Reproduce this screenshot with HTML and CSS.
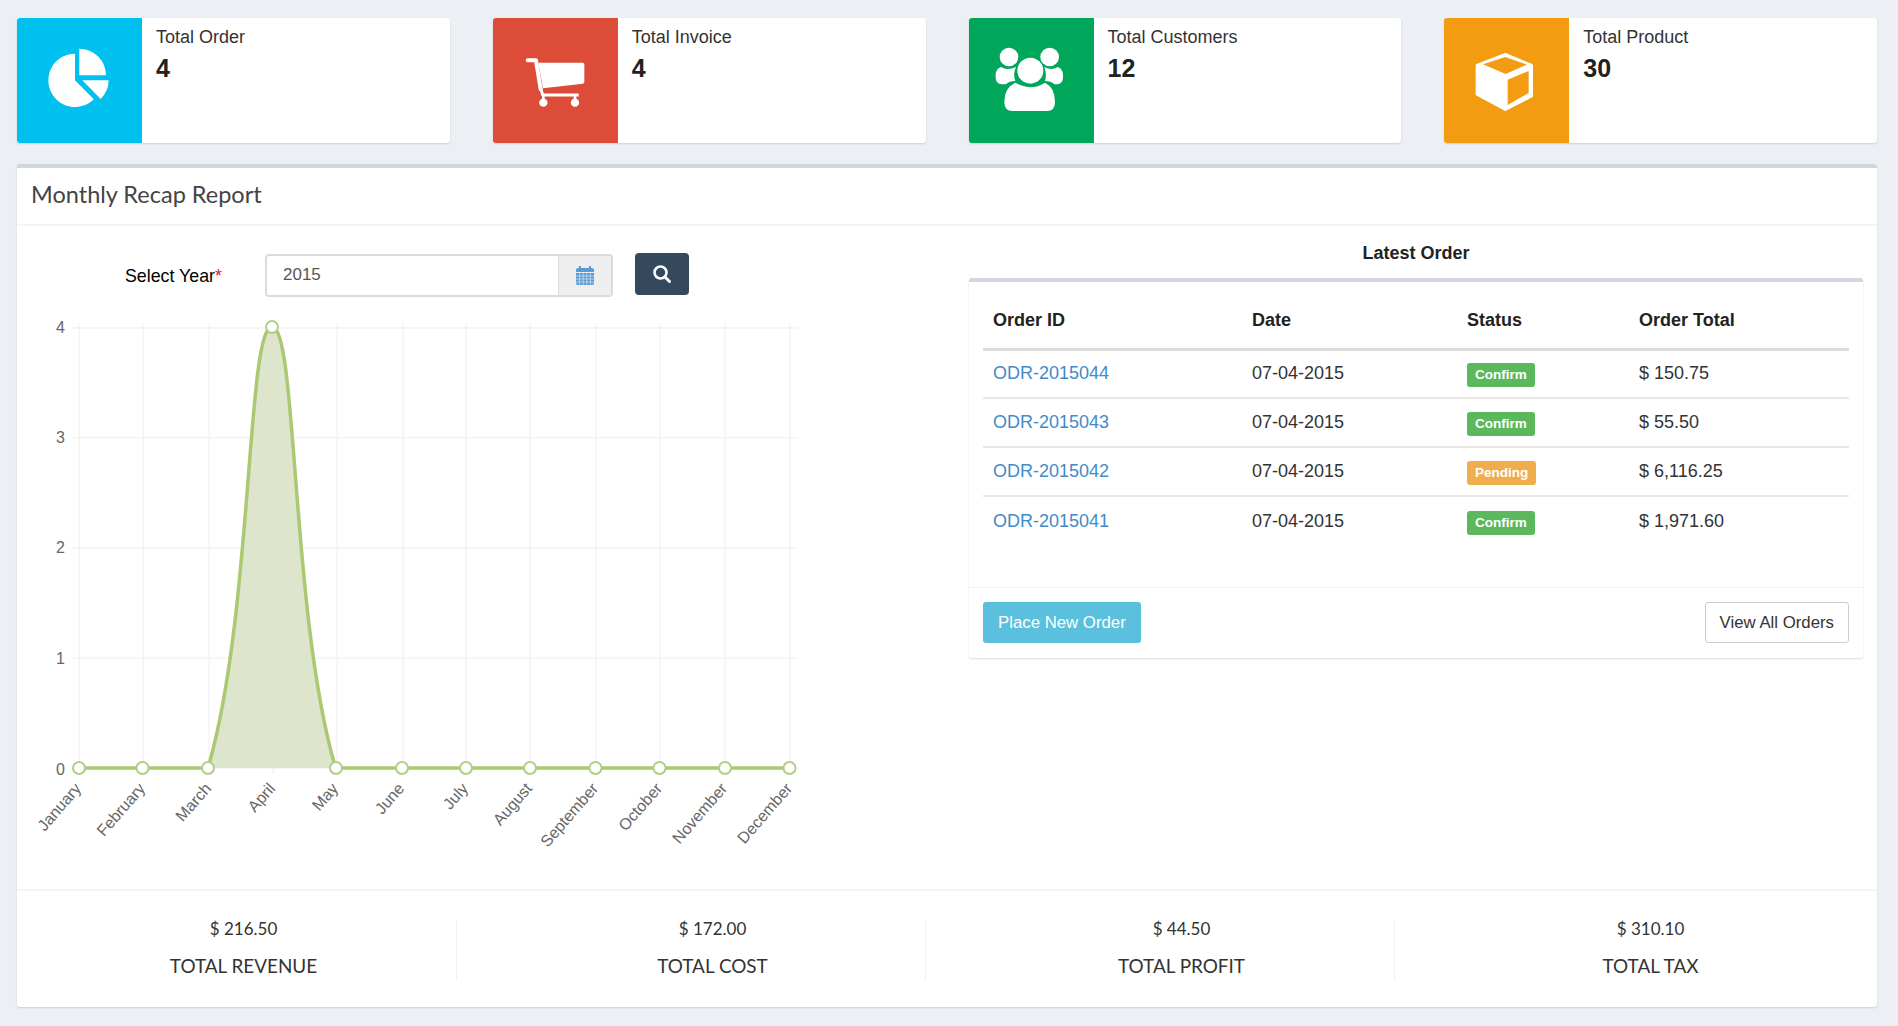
FILE: index.html
```html
<!DOCTYPE html>
<html lang="en">
<head>
<meta charset="utf-8">
<title>Monthly Recap Report</title>
<link rel="stylesheet" href="styles.css">
</head>
<body>
<main class="page">
  <section class="cards">
    <article class="card">
      <div class="card-icon bg-blue">
        <svg class="icon" viewBox="0 0 300 300"><path fill="#fff" d="M135 68V148L191.600 204.600A80 80 0 1 1 135 68Z"/><path fill="#fff" d="M148 53A80 80 0 0 1 228 133H148Z"/><path fill="#fff" d="M157 148H236A80 80 0 0 1 212 204Z"/></svg>
      </div>
      <div class="card-body"><div class="card-label">Total Order</div><div class="card-value">4</div></div>
    </article>
    <article class="card">
      <div class="card-icon bg-red">
        <svg class="icon icon-cart" viewBox="0 0 300 300"><path fill="none" stroke="#fff" stroke-width="12" stroke-linecap="round" stroke-linejoin="round" d="M65 88H90L104 175"/><path fill="#fff" d="M97 95H230Q235 95 235 100V152Q235 157 230 158L111 172Z"/><path fill="none" stroke="#fff" stroke-width="9" stroke-linejoin="round" d="M104 172L110 192H218"/><path fill="none" stroke="#fff" stroke-width="8" d="M112 192V210M207 192V210"/><circle cx="112" cy="215" r="12.500" fill="#fff"/><circle cx="207" cy="215" r="12.500" fill="#fff"/></svg>
      </div>
      <div class="card-body"><div class="card-label">Total Invoice</div><div class="card-value">4</div></div>
    </article>
    <article class="card">
      <div class="card-icon bg-green">
        <svg class="icon" viewBox="0 0 300 300"><circle cx="84" cy="78" r="28" fill="#fff"/><circle cx="206" cy="78" r="28" fill="#fff"/><circle cx="148" cy="119" r="39" fill="#fff"/><path fill="#fff" d="M44 130Q46 112 60 108Q78 120 105 108Q95 130 103 150Q85 150 75 160H62Q44 158 44 140Z"/><path fill="#fff" d="M246 130Q244 112 230 108Q212 120 190 108Q198 130 192 150Q210 150 220 160H228Q246 158 246 140Z"/><path fill="#fff" d="M70 212Q70 170 103 155Q148 182 192 155Q222 170 222 212Q222 240 198 240H94Q70 240 70 212Z"/></svg>
      </div>
      <div class="card-body"><div class="card-label">Total Customers</div><div class="card-value">12</div></div>
    </article>
    <article class="card">
      <div class="card-icon bg-orange">
        <svg class="icon" viewBox="0 0 300 300"><path fill="#fff" stroke="#fff" stroke-width="8" stroke-linejoin="round" d="M145 70L224 103V195L145 236L60 190V103Z"/><path fill="#f39c12" d="M145 78L210 101L146 129L78 100Z"/><path fill="#f39c12" d="M152 146L215 120V186L152 222Z"/></svg>
      </div>
      <div class="card-body"><div class="card-label">Total Product</div><div class="card-value">30</div></div>
    </article>
  </section>

  <section class="box">
    <header class="box-header"><h1 class="box-title">Monthly Recap Report</h1></header>
    <div class="box-body">
      <div class="left-col">
        <form class="year-form">
          <label class="year-label">Select Year<span class="req">*</span></label>
          <div class="input-group">
            <span class="year-input">2015</span>
            <span class="input-addon">
              <svg class="cal" viewBox="0 0 18 19"><path fill="#5b9bd5" d="M0 4Q0 2 2 2H3V0H5V2H13V0H15V2H16Q18 2 18 4V6H0Z"/><path fill="#5b9bd5" d="M0 7H18V17Q18 19 16 19H2Q0 19 0 17Z"/><path stroke="#d4e3f3" stroke-width=".7" d="M0 10H18M0 13H18M0 16H18M3.600 7V19M7.200 7V19M10.800 7V19M14.400 7V19"/></svg>
            </span>
          </div>
          <button type="button" class="search-btn" aria-label="Search">
            <svg class="search" viewBox="0 0 20 20"><circle cx="8.500" cy="8.500" r="6" fill="none" stroke="#fff" stroke-width="2.600"/><path stroke="#fff" stroke-width="3" stroke-linecap="round" d="M13 13L17.500 17.500"/></svg>
          </button>
        </form>
        <svg class="chart" viewBox="17 300 810 580">
          <g class="grid">
            <path d="M72 328H798M72 437.700H798M72 548H798M72 658H798M72 768H798"/>
            <path d="M79 323V774M143 323V774M209 323V774M273 323V774M337 323V774M403 323V774M466 323V774M530 323V774M596 323V774M660 323V774M725 323V774M790 323V774"/>
          </g>
          <g class="y-axis">
            <text x="65" y="332.500">4</text><text x="65" y="442.500">3</text><text x="65" y="552.500">2</text><text x="65" y="663.500">1</text><text x="65" y="774.500">0</text>
          </g>
          <path class="area" d="M208 768C253 614 246.500 327 272 327C297.500 327 290.600 615 335.600 768Z"/>
          <path class="line" d="M79 768H208C253 614 246.500 327 272 327C297.500 327 290.600 615 335.600 768H790"/>
          <g class="points">
            <circle cx="79" cy="768" r="6"/><circle cx="142.500" cy="768" r="6"/><circle cx="208" cy="768" r="6"/><circle cx="272" cy="327" r="6"/><circle cx="336" cy="768" r="6"/><circle cx="402" cy="768" r="6"/><circle cx="466" cy="768" r="6"/><circle cx="530" cy="768" r="6"/><circle cx="595.500" cy="768" r="6"/><circle cx="659.500" cy="768" r="6"/><circle cx="725" cy="768" r="6"/><circle cx="789.500" cy="768" r="6"/>
          </g>
          <g class="x-axis">
            <text transform="translate(82 789) rotate(-49)">January</text>
            <text transform="translate(146 789) rotate(-49)">February</text>
            <text transform="translate(212 789) rotate(-49)">March</text>
            <text transform="translate(276 789) rotate(-49)">April</text>
            <text transform="translate(339 789) rotate(-49)">May</text>
            <text transform="translate(405 789) rotate(-49)">June</text>
            <text transform="translate(469 789) rotate(-49)">July</text>
            <text transform="translate(533 789) rotate(-49)">August</text>
            <text transform="translate(599 789) rotate(-49)">September</text>
            <text transform="translate(663 789) rotate(-49)">October</text>
            <text transform="translate(728 789) rotate(-49)">November</text>
            <text transform="translate(793 789) rotate(-49)">December</text>
          </g>
        </svg>
      </div>

      <div class="right-col">
        <h2 class="latest-title">Latest Order</h2>
        <div class="order-box">
          <div class="order-table-wrap">
            <table class="order-table">
              <colgroup><col class="c-id"><col class="c-date"><col class="c-status"><col class="c-total"></colgroup>
              <thead><tr><th>Order ID</th><th>Date</th><th>Status</th><th>Order Total</th></tr></thead>
              <tbody>
                <tr><td><a href="#">ODR-2015044</a></td><td>07-04-2015</td><td><span class="badge badge-ok">Confirm</span></td><td>$ 150.75</td></tr>
                <tr><td><a href="#">ODR-2015043</a></td><td>07-04-2015</td><td><span class="badge badge-ok">Confirm</span></td><td>$ 55.50</td></tr>
                <tr><td><a href="#">ODR-2015042</a></td><td>07-04-2015</td><td><span class="badge badge-wait">Pending</span></td><td>$ 6,116.25</td></tr>
                <tr><td><a href="#">ODR-2015041</a></td><td>07-04-2015</td><td><span class="badge badge-ok">Confirm</span></td><td>$ 1,971.60</td></tr>
              </tbody>
            </table>
          </div>
          <div class="order-footer">
            <a class="btn btn-info" href="#">Place New Order</a>
            <a class="btn btn-default" href="#">View All Orders</a>
          </div>
        </div>
      </div>
    </div>
    <footer class="box-footer">
      <div class="stat"><div class="stat-value">$ 216.50</div><div class="stat-label">TOTAL REVENUE</div></div>
      <div class="stat"><div class="stat-value">$ 172.00</div><div class="stat-label">TOTAL COST</div></div>
      <div class="stat"><div class="stat-value">$ 44.50</div><div class="stat-label">TOTAL PROFIT</div></div>
      <div class="stat"><div class="stat-value">$ 310.10</div><div class="stat-label">TOTAL TAX</div></div>
    </footer>
  </section>
</main>
</body>
</html>
```

FILE: styles.css
```css
* { box-sizing: border-box; }
html, body { margin: 0; height: 100%; }
body {
  background: #ecf0f5;
  font-family: "Liberation Sans", Arial, sans-serif;
  font-size: 18px;
  color: #333;
  overflow: hidden;
}
.page { padding: 18px 21px 0 17px; }

.cards {
  display: grid;
  grid-template-columns: repeat(4, 1fr);
  column-gap: 43px;
  margin-bottom: 21px;
}
.card {
  display: flex;
  height: 125px;
  background: #fff;
  border-radius: 3px;
  box-shadow: 0 1px 2px rgba(0, 0, 0, .14);
  overflow: hidden;
}
.card-icon {
  flex: 0 0 125px;
  display: flex;
  align-items: center;
  justify-content: center;
}
.icon { width: 100px; height: 100px; }
.icon-cart { margin-left: 2px; }
.bg-blue { background: #00c0ef; }
.bg-red { background: #dd4b39; }
.bg-green { background: #00a65a; }
.bg-orange { background: #f39c12; }
.card-body { padding: 8px 14px; }
.card-label { line-height: 23px; }
.card-value { margin-top: 4px; font-size: 25px; font-weight: 700; line-height: 30px; color: #222; }

.box {
  background: #fff;
  border-top: 4px solid #d2d6de;
  border-radius: 3px;
  box-shadow: 0 1px 2px rgba(0, 0, 0, .14);
  height: 843px;
}
.box-header {
  height: 58px;
  padding: 0 14px 4px;
  display: flex;
  align-items: center;
  border-bottom: 2px solid #f4f4f4;
}
.box-title {
  margin: 0;
  font-family: Lato, "Noto Sans", sans-serif;
  font-size: 23.500px;
  font-weight: 400;
  color: #444;
}
.box-body { display: flex; height: 663px; padding-right: 14px; }
.left-col { flex: 0 0 952px; padding-top: 27px; }
.right-col { flex: 1; min-width: 0; }

.year-form { display: flex; align-items: flex-start; height: 47px; padding-left: 108px; }
.year-label { width: 140px; padding-top: 11px; line-height: 24px; font-size: 17.800px; color: #000; }
.req { color: #e02020; }
.input-group {
  display: flex;
  width: 348px;
  height: 43px;
  margin-top: 1px;
  border: 2px solid #d8dbe0;
  border-radius: 4px;
  overflow: hidden;
}
.year-input { flex: 1; padding: 0 16px; line-height: 38px; font-size: 17px; color: #555; }
.input-addon {
  flex: 0 0 53px;
  display: flex;
  align-items: center;
  justify-content: center;
  background: #eee;
  border-left: 1px solid #d8dbe0;
}
.cal { width: 18px; height: 19px; }
.search-btn {
  width: 54px;
  height: 42px;
  margin-left: 22px;
  padding: 0;
  display: flex;
  align-items: center;
  justify-content: center;
  background: #34495e;
  border: 0;
  border-radius: 4px;
}
.search { width: 20px; height: 20px; }

.chart { display: block; width: 810px; height: 580px; }
.grid path { fill: none; stroke: #eee; stroke-width: 1; }
.y-axis text { font-size: 16px; fill: #666; text-anchor: end; }
.x-axis text { font-size: 16px; fill: #666; text-anchor: end; }
.area { fill: #dde5cc; }
.line { fill: none; stroke: #abc873; stroke-width: 3.500; }
.points circle { fill: #fff; stroke: #b4cd85; stroke-width: 2; }

.latest-title {
  margin: 0;
  height: 52px;
  padding-top: 14px;
  font-size: 18px;
  line-height: 26px;
  font-weight: 700;
  text-align: center;
  color: #222;
}
.order-box {
  background: #fff;
  border-top: 4px solid #d2d6de;
  border-radius: 3px;
  box-shadow: 0 1px 2px rgba(0, 0, 0, .14);
}
.order-table-wrap { height: 305px; padding: 13px 14px 0; }
.order-table { width: 100%; border-collapse: collapse; table-layout: fixed; }
.c-id { width: 259px; }
.c-date { width: 215px; }
.c-status { width: 172px; }
.order-table th {
  height: 54px;
  padding: 0 10px 1px;
  text-align: left;
  font-weight: 700;
  color: #222;
  border-bottom: 3px solid #ddd;
}
.order-table td {
  height: 49px;
  padding: 0 10px;
  border-top: 2px solid #e8e8e8;
  color: #333;
}
.order-table tbody tr:first-child td { border-top: 0; }
.order-table tbody tr:last-child td { border-bottom: 0; }
.order-table a { color: #428bca; text-decoration: none; }
.badge {
  display: inline-block;
  margin-top: 3px;
  padding: 0 8px;
  height: 24px;
  line-height: 24px;
  font-size: 13.500px;
  font-weight: 700;
  color: #fff;
  border-radius: 3px;
  vertical-align: middle;
}
.badge-ok { background: #5cb85c; }
.badge-wait { background: #f0ad4e; }
.order-footer {
  display: flex;
  justify-content: space-between;
  height: 71px;
  padding: 14px 14px 0;
  border-top: 1px solid #f4f4f4;
}
.btn {
  height: 41px;
  padding: 0 14px;
  line-height: 39px;
  font-size: 16.800px;
  text-decoration: none;
  border: 1px solid transparent;
  border-radius: 3px;
}
.btn-info { background: #5bc0de; color: #fff; }
.btn-default { background: #fff; color: #333; border: 1px solid #ccc; }

.box-footer {
  display: flex;
  column-gap: 43px;
  height: 118px;
  padding: 28px 14px 0;
  border-top: 2px solid #f4f4f4;
}
.stat {
  flex: 1;
  height: 62px;
  text-align: center;
  border-right: 1px solid #f0f0f0;
  font-family: Lato, "Noto Sans", sans-serif;
  color: #333;
}
.stat:last-child { border-right: 0; }
.stat-value { font-size: 17px; font-weight: 400; line-height: 20px; }
.stat-label { margin-top: 15px; font-size: 18.900px; line-height: 24px; }
```
